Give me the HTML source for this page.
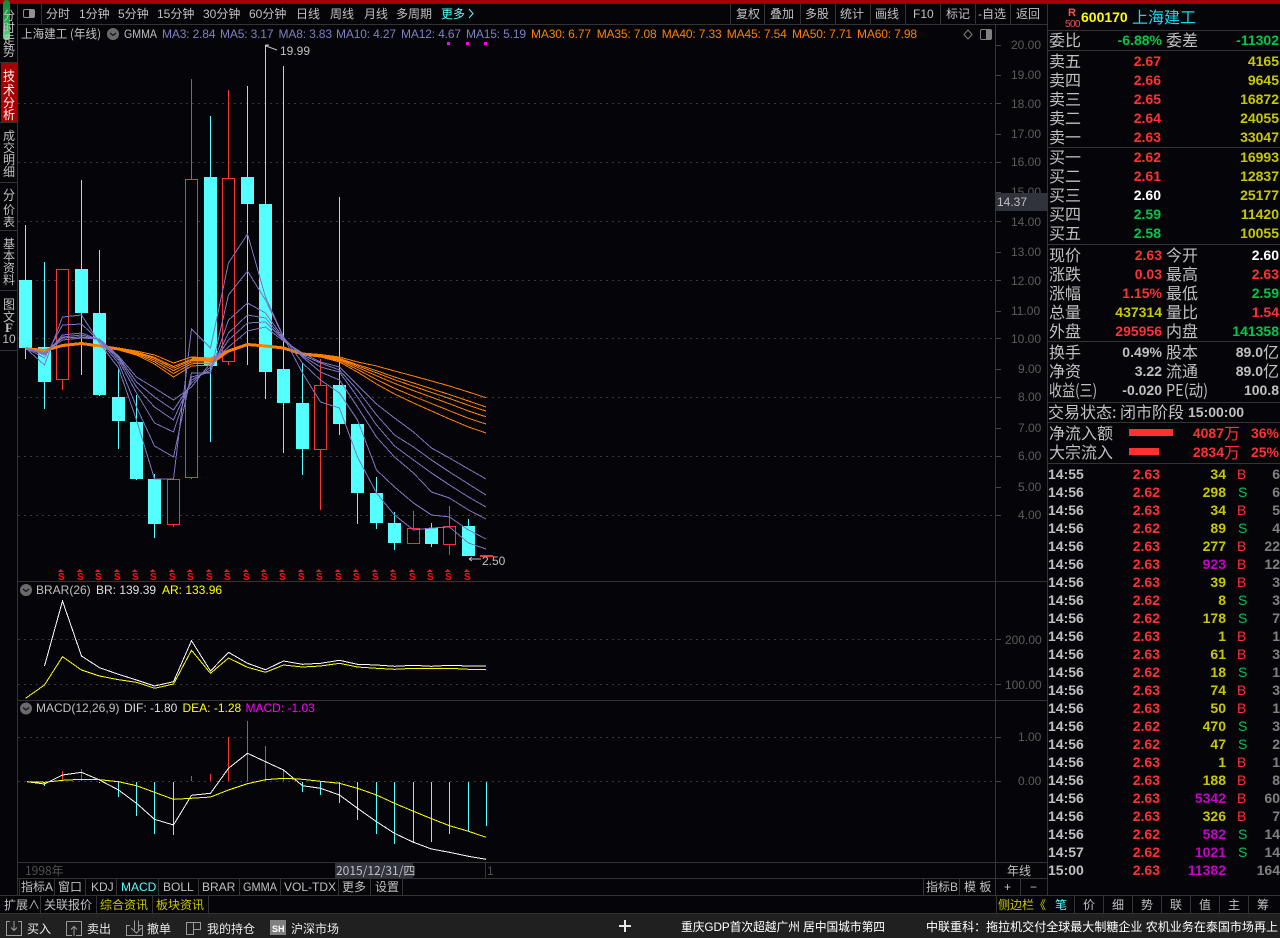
<!DOCTYPE html>
<html><head><meta charset="utf-8"><style>
html,body{margin:0;padding:0;background:#050509;width:1280px;height:938px;overflow:hidden}
svg{display:block}
text{font-family:"Liberation Sans","WenQuanYi Zen Hei","Noto Sans CJK SC",sans-serif;font-size:12px;fill:#c0c0c0}
polyline{shape-rendering:crispEdges}
.cn{font-family:"WenQuanYi Zen Hei","Noto Sans CJK SC",sans-serif}
.l{font-size:16px;font-family:"WenQuanYi Zen Hei","Noto Sans CJK SC",sans-serif}
.n text,.n{font-size:14px;font-weight:bold}
.r,.r text{fill:#ff3232}.y,.y text{fill:#c8c800}.v,.v text{fill:#00c848}.m,.m text{fill:#c800c8}.w{fill:#fff}
.e text{text-anchor:end}
.p polyline{fill:none;stroke:#7d75c0;stroke-width:1}
.o polyline{fill:none;stroke:#ff8000;stroke-width:1}
.ax text{fill:#5c5c5c}
.ma text{fill:#8080c0;letter-spacing:-.15px}
.ma2 text{fill:#ff8000;letter-spacing:-.15px}
</style></head><body>
<svg xmlns="http://www.w3.org/2000/svg" width="1280" height="938" viewBox="0 0 1280 938">
<defs><linearGradient id="gr" x1="0" y1="0" x2="0" y2="1"><stop offset="0" stop-color="#0a8a30"/><stop offset=".6" stop-color="#20b050"/><stop offset="1" stop-color="#70e890"/></linearGradient></defs>
<rect width="1280" height="938" fill="#050509"/>
<g shape-rendering="crispEdges">
<rect width="1280" height="3" fill="#a80000"/>
<rect y="3" width="1280" height="1" fill="#2c2c2c"/>
<rect x="1" y="63" width="16" height="59" fill="#a80000"/>
<path d="M17.5 0V896M0 62.5H17M0 122.5H17M0 182.5H17M0 230.5H17M0 290.5H17M0 350.5H17" stroke="#333" fill="none"/>
<path d="M18 24.5H1047M41.5 4V24M730.5 4V24M764.5 4V24M800.5 4V24M835.5 4V24M870.5 4V24M905.5 4V24M940.5 4V24M975.5 4V24M1010.5 4V24M1047.5 4V896M995.5 25V896M18 581.5H1047M18 700.5H1047M18 862.5H1047M18 878.5H1047M0 895.5H1280M1047 30.5H1280M1047 50.5H1280M1047 147.5H1280M1047 244.5H1280M1047 341.5H1280M1047 402.5H1280M1047 422.5H1280M1047 463.5H1280" stroke="#333" fill="none"/>
<path d="M19.5 879V895M54.5 879V895M85.5 879V895M116.5 879V895M158.5 879V895M198.5 879V895M239.5 879V895M280.5 879V895M338.5 879V895M370.5 879V895M402.5 879V895M923.5 879V895M959.5 879V895M1020.5 879V895M485.5 863V878M40.5 896V913M96.5 896V913M152.5 896V913M208.5 896V913M996.5 896V913M1074.5 896V913M1103.5 896V913M1132.5 896V913M1161.5 896V913M1190.5 896V913M1219.5 896V913M1248.5 896V913" stroke="#333" fill="none"/>
<path d="M18 103.5H996M18 162.5H996M18 221.5H996M18 280.5H996M18 338.5H996M18 397.5H996M18 456.5H996M18 515.5H996M18 639.5H996M18 684.5H996M18 737.5H996M18 781.5H996" stroke="#3a3a3a" stroke-dasharray="2 4" fill="none"/>
<path d="M996 45.5h5M996 75.5h5M996 103.5h5M996 134.5h5M996 162.5h5M996 192.5h5M996 221.5h5M996 252.5h5M996 280.5h5M996 311.5h5M996 338.5h5M996 369.5h5M996 397.5h5M996 428.5h5M996 456.5h5M996 487.5h5M996 515.5h5M996 639.5h5M996 684.5h5M996 737.5h5M996 781.5h5" stroke="#444" fill="none"/>
<rect x="0" y="914" width="1280" height="24" fill="#202020"/>
<rect x="0" y="913" width="1280" height="1" fill="#333"/>
<!-- candles -->
<path stroke="#54ffff" fill="none" d="M25.5 225V359M44.5 262V409M81.5 180V375M99.5 250V396M118.5 368V449M136.5 395V480M154.5 474V538M210.5 116V442M247.5 86V365M265.5 45V399M283.5 66V453M302.5 363V475M339.5 197V435M357.5 424V524M376.5 477V529M394.5 512V550M431.5 523V547M468.5 519V556"/>
<path stroke="#ff3232" fill="none" d="M62.5 380V390M173.5 525V527M191.5 79V179M191.5 478V479M228.5 90V178M228.5 362V365M320.5 359V385M320.5 450V510M413.5 511V528M449.5 506V526M449.5 545V555"/>
<path fill="#54ffff" d="M19 280h13v68h-13zM38 347h13v35h-13zM75 269h13v44h-13zM93 313h13v82h-13zM112 397h13v24h-13zM130 422h13v57h-13zM148 479h13v45h-13zM204 177h13v189h-13zM241 177h13v27h-13zM259 204h13v168h-13zM277 369h13v34h-13zM296 403h13v46h-13zM333 385h13v39h-13zM351 424h13v69h-13zM370 493h13v30h-13zM388 523h13v20h-13zM425 528h13v16h-13zM462 526h13v30h-13z"/>
<path fill="#050509" stroke="#ff3232" d="M56.5 269.5h12v110h-12zM167.5 479.5h12v45h-12zM185.5 179.5h12v298h-12zM222.5 178.5h12v183h-12zM314.5 385.5h12v64h-12zM407.5 528.5h12v15h-12zM443.5 526.5h12v18h-12z"/>
<rect x="480" y="555" width="13" height="2" fill="#ff3232"/>
</g>
<g class="o">
<polyline points="25.5,348 44.5,349.5 62.5,345 81.5,343 99.5,345 118.5,348 136.5,351 154.5,355 173.5,363 191.5,357 210.5,358 228.5,350 247.5,343.5 265.5,345 283.5,347 302.5,353 320.5,354.5 339.5,357 357.5,362 376.5,366 394.5,371 413.5,376 431.5,381 449.5,386 468.5,392 486,397.7"/>
<polyline points="25.5,348 44.5,350 62.5,345.3 81.5,343.3 99.5,345.4 118.5,348.5 136.5,352 154.5,357.3 173.5,366.6 191.5,359.3 210.5,359.8 228.5,350.5 247.5,344 265.5,345.4 283.5,347.5 302.5,353.5 320.5,355 339.5,358.3 357.5,364.6 376.5,370.7 394.5,377 413.5,383 431.5,388.8 449.5,394.6 468.5,401 486,407"/>
<polyline points="25.5,348 44.5,350 62.5,345.4 81.5,343.4 99.5,345.6 118.5,348.8 136.5,352.5 154.5,358.4 173.5,368.3 191.5,360.4 210.5,360.7 228.5,350.8 247.5,344 265.5,345.6 283.5,347.8 302.5,353.8 320.5,355.5 339.5,359 357.5,365.8 376.5,372.8 394.5,379.7 413.5,386.3 431.5,392.4 449.5,398.5 468.5,405.3 486,411"/>
<polyline points="25.5,348 44.5,350.3 62.5,345.5 81.5,343.5 99.5,345.8 118.5,349 136.5,353 154.5,360 173.5,370.6 191.5,361.9 210.5,361.8 228.5,351 247.5,344.3 265.5,345.8 283.5,348 302.5,354 320.5,355.9 339.5,359.7 357.5,367.4 376.5,375.7 394.5,383.4 413.5,390.6 431.5,397.2 449.5,403.8 468.5,411 486,416.8"/>
<polyline points="25.5,348 44.5,350.6 62.5,345.8 81.5,343.8 99.5,346.1 118.5,349.5 136.5,354 154.5,361.8 173.5,373.5 191.5,363.8 210.5,363.3 228.5,351.5 247.5,344.6 265.5,346.1 283.5,348.5 302.5,354.5 320.5,356.4 339.5,360.8 357.5,369.5 376.5,379.5 394.5,388.3 413.5,396.3 431.5,403.5 449.5,410.8 468.5,418.3 486,424"/>
<polyline points="25.5,348 44.5,351 62.5,346 81.5,344 99.5,346.5 118.5,350 136.5,355 154.5,364 173.5,377 191.5,366 210.5,365 228.5,352 247.5,345 265.5,346.5 283.5,349 302.5,355 320.5,357 339.5,362 357.5,372 376.5,384 394.5,394 413.5,403 431.5,411 449.5,419 468.5,427 486,433"/>
<polyline style="stroke-width:3" points="25.5,348.5 44.5,350.5 62.5,345.5 81.5,343.5 99.5,346 118.5,349"/>
<polyline style="stroke-width:3" points="191.5,359 210.5,360 228.5,351 247.5,344.5 265.5,346 283.5,348 302.5,354 320.5,356 339.5,359"/>
</g>
<g class="p">
<polyline points="25.5,348 44.5,365 62.5,317 81.5,315 99.5,343 118.5,368 136.5,420 154.5,479 173.5,479 191.5,329 210.5,348 228.5,263 247.5,234 265.5,297 283.5,337 302.5,373 320.5,402 339.5,408 357.5,457 376.5,493 394.5,515 413.5,530 431.5,528 449.5,527 468.5,543 486,549"/>
<polyline points="25.5,348 44.5,358 62.5,325 81.5,324 99.5,341 118.5,363 136.5,407 154.5,446 173.5,457 191.5,373 210.5,373 228.5,295 247.5,271 265.5,300 283.5,337 302.5,363 320.5,380 339.5,393 357.5,420 376.5,470 394.5,487 413.5,503 431.5,515 449.5,517 468.5,530 486,539"/>
<polyline points="25.5,348 44.5,355 62.5,335 81.5,333 99.5,340 118.5,360 136.5,393 154.5,423 173.5,432 191.5,377 210.5,372 228.5,320 247.5,303 265.5,313 283.5,338 302.5,357 320.5,372 339.5,380 357.5,407 376.5,437 394.5,457 413.5,473 431.5,492 449.5,498 468.5,510 486,519"/>
<polyline points="25.5,348 44.5,354 62.5,337 81.5,335 99.5,340 118.5,358 136.5,387 154.5,407 173.5,420 191.5,380 210.5,370 228.5,333 247.5,315 265.5,318 283.5,339 302.5,356 320.5,367 339.5,372 357.5,397 376.5,425 394.5,446 413.5,460 431.5,473 449.5,485 468.5,497 486,507"/>
<polyline points="25.5,348 44.5,353 62.5,338 81.5,337 99.5,339.5 118.5,357 136.5,382 154.5,397 173.5,410 191.5,383 210.5,367 228.5,340 247.5,323 265.5,322 283.5,340 302.5,355 320.5,363 339.5,370 357.5,390 376.5,415 394.5,435 413.5,447 431.5,460 449.5,472 468.5,484 486,495"/>
<polyline points="25.5,348 44.5,352.7 62.5,340 81.5,338 99.5,339 118.5,356 136.5,377 154.5,388 173.5,400 191.5,387 210.5,363 228.5,347 247.5,331 265.5,327 283.5,341 302.5,353 320.5,362 339.5,367 357.5,385 376.5,404 394.5,418 413.5,432 431.5,448 449.5,458 468.5,469 486,479"/>
</g>
<!-- S markers -->
<path fill="#ff1010" d="M60.7 569l3 3h-6zM79.7 569l3 3h-6zM97.7 569l3 3h-6zM116.7 569l3 3h-6zM134.7 569l3 3h-6zM152.7 569l3 3h-6zM171.7 569l3 3h-6zM189.7 569l3 3h-6zM208.7 569l3 3h-6zM226.7 569l3 3h-6zM245.7 569l3 3h-6zM263.7 569l3 3h-6zM281.7 569l3 3h-6zM300.7 569l3 3h-6zM318.7 569l3 3h-6zM337.7 569l3 3h-6zM355.7 569l3 3h-6zM374.7 569l3 3h-6zM392.7 569l3 3h-6zM411.7 569l3 3h-6zM429.7 569l3 3h-6zM447.7 569l3 3h-6zM466.7 569l3 3h-6z"/>
<text y="580" style="font-size:10px;font-weight:bold;fill:#ff1010" x="58 77 95 114 132 150 169 187 206 224 243 261 279 298 316 335 353 372 390 409 427 445 464">SSSSSSSSSSSSSSSSSSSSSSS</text>
<!-- BRAR -->
<polyline fill="none" stroke="#fff" points="44.5,666 62.5,601 81.5,656 99.5,667.7 118.5,674.3 136.5,680 154.5,686 173.5,681.7 191.5,640.7 210.5,671 228.5,652.3 247.5,663.3 265.5,669.7 283.5,661 302.5,664.3 320.5,663.3 339.5,660.3 357.5,664.3 376.5,665 394.5,666.3 413.5,665.3 431.5,666.3 449.5,665.3 468.5,666 486,666"/>
<polyline fill="none" stroke="#ffff00" points="25.5,698.3 44.5,685 62.5,656.7 81.5,670 99.5,676 118.5,679.7 136.5,682.3 154.5,688.3 173.5,684 191.5,650.3 210.5,673.3 228.5,658 247.5,667.3 265.5,672.3 283.5,665 302.5,667 320.5,666 339.5,663.3 357.5,667 376.5,668.3 394.5,669.3 413.5,668.3 431.5,668.7 449.5,668.3 468.5,669.3 486,669.3"/>
<!-- MACD -->
<g shape-rendering="crispEdges" fill="none">
<path stroke="#ff3232" d="M62.5 771V781M81.5 769V781M191.5 776V781M210.5 774V781M228.5 737V781M247.5 721V781M265.5 746V781M283.5 769V781"/>
<path stroke="#54ffff" d="M44.5 782V786M99.5 782V783M118.5 782V797M136.5 782V816M154.5 782V834M173.5 782V835M302.5 782V792M320.5 782V795M339.5 782V803M357.5 782V820M376.5 782V834M394.5 782V844M413.5 782V843M431.5 782V842M449.5 782V834M468.5 782V831M486.5 782V826"/>
</g>
<polyline fill="none" stroke="#fff" points="27,781.7 44.5,784 62.5,775 81.5,772.3 99.5,780 118.5,790 136.5,803.3 154.5,819.3 173.5,825 191.5,795.3 210.5,793.3 228.5,768.3 247.5,753.3 265.5,761.7 283.5,770 302.5,785.7 320.5,788.3 339.5,795 357.5,808.3 376.5,821.7 394.5,833.3 413.5,842.3 431.5,849 449.5,852.3 468.5,856.3 486,859.3"/>
<polyline fill="none" stroke="#ffff00" points="27,781.7 44.5,782.3 62.5,780.3 81.5,779.3 99.5,779.7 118.5,781.7 136.5,785.7 154.5,792.3 173.5,799.3 191.5,798.3 210.5,797 228.5,790 247.5,783.7 265.5,779.7 283.5,778.3 302.5,779.3 320.5,781.3 339.5,783.3 357.5,788.3 376.5,795 394.5,803.3 413.5,811.3 431.5,818.7 449.5,825.7 468.5,831.3 486,837.3"/>

<!-- left tabs -->
<rect x="3" y="0" width="7" height="40" rx="3" fill="url(#gr)"/>
<g class="cn" text-anchor="middle">
<text transform="translate(9,20) scale(1,1.05)" text-anchor="middle">分</text><text x="9" y="32" text-anchor="middle">时</text><text x="9" y="44" text-anchor="middle">走</text><text transform="translate(9,56) scale(1,1.1)" text-anchor="middle">势</text>
<text transform="translate(9,81) scale(1,1.15)" text-anchor="middle" style="fill:#fff">技</text><text transform="translate(9,95) scale(1,1.1)" text-anchor="middle" style="fill:#fff">术</text><text x="9" y="107" text-anchor="middle" style="fill:#fff">分</text><text x="9" y="119" text-anchor="middle" style="fill:#fff">析</text>
<text x="9" y="140" text-anchor="middle">成</text><text x="9" y="152" text-anchor="middle">交</text><text x="9" y="164" text-anchor="middle">明</text><text x="9" y="176" text-anchor="middle">细</text>
<text transform="translate(9,200) scale(1,1.15)" text-anchor="middle">分</text><text x="9" y="214" text-anchor="middle">价</text><text x="9" y="226" text-anchor="middle">表</text>
<text x="9" y="248" text-anchor="middle">基</text><text x="9" y="260" text-anchor="middle">本</text><text x="9" y="272" text-anchor="middle">资</text><text x="9" y="284" text-anchor="middle">料</text>
<text transform="translate(9,309) scale(1,1.1)" text-anchor="middle">图</text><text x="9" y="321" text-anchor="middle">文</text>
</g>
<text x="9" y="332" text-anchor="middle" style="font-family:'Liberation Serif',serif;font-weight:bold;font-size:13px">F</text>
<text x="9" y="343" text-anchor="middle">10</text>

<!-- toolbar -->
<rect x="23.5" y="9.5" width="11" height="8" rx="1.5" fill="none" stroke="#909090"/><rect x="29" y="10" width="5" height="7" fill="#909090"/>
<g class="cn">
<text x="46" y="18">分时</text><text x="79" y="18">1分钟</text><text x="118" y="18">5分钟</text><text x="157" y="18">15分钟</text><text x="203" y="18">30分钟</text><text x="249" y="18">60分钟</text><text x="296" y="18">日线</text><text x="330" y="18">周线</text><text x="364" y="18">月线</text><text x="396" y="18">多周期</text><text x="441" y="18" style="fill:#54ffff">更多</text>
<text x="736" y="18">复权</text><text x="770" y="18">叠加</text><text x="805" y="18">多股</text><text x="840" y="18">统计</text><text x="875" y="18">画线</text><text x="913" y="18">F10</text><text x="946" y="18">标记</text><text x="978" y="18">-自选</text><text x="1016" y="18">返回</text>
</g>
<path d="M469 9l4 4.5-4 4.5" fill="none" stroke="#54ffff"/>

<!-- chart header -->
<text x="21" y="38" class="cn" textLength="80" lengthAdjust="spacingAndGlyphs">上海建工 (年线)</text>
<g fill="#6a6a6a"><circle cx="113" cy="34" r="6"/><circle cx="26" cy="590" r="6"/><circle cx="26" cy="708.5" r="6"/></g>
<path d="M110 33l3 2.5 3-2.5M23 589l3 2.5 3-2.5M23 707.5l3 2.5 3-2.5" fill="none" stroke="#101010" stroke-width="1.2"/>
<text x="124" y="38" textLength="33" lengthAdjust="spacingAndGlyphs">GMMA</text>
<g class="ma"><text x="162" y="38">MA3: 2.84</text><text x="220" y="38">MA5: 3.17</text><text x="278.5" y="38">MA8: 3.83</text><text x="336" y="38">MA10: 4.27</text><text x="401" y="38">MA12: 4.67</text><text x="466" y="38">MA15: 5.19</text></g>
<g class="ma2"><text x="531" y="38">MA30: 6.77</text><text x="596.7" y="38">MA35: 7.08</text><text x="661.7" y="38">MA40: 7.33</text><text x="726.8" y="38">MA45: 7.54</text><text x="792" y="38">MA50: 7.71</text><text x="857" y="38">MA60: 7.98</text></g>
<path d="M968 30l4 4.5-4 4.5-4-4.5z" fill="none" stroke="#808080"/>
<rect x="980.5" y="29.5" width="11" height="10" rx="1.5" fill="none" stroke="#808080"/><rect x="986" y="30" width="5" height="9" fill="#808080"/>
<g fill="#ff00ff"><rect x="447" y="42" width="3" height="3"/><rect x="466" y="42" width="3" height="3"/><rect x="484" y="42" width="3" height="3"/></g>
<path d="M265.5 45h3M266 46l11 4M266 46l3-1" stroke="#c0c0c0" fill="none"/>
<text x="280" y="55">19.99</text>
<path d="M469 559h12M469 559l3-2M469 559l3 2" stroke="#c0c0c0" fill="none"/>
<text x="482" y="565">2.50</text>

<!-- axis -->
<g class="ax"><text x="1011" y="49">20.00</text><text x="1011" y="79">19.00</text><text x="1011" y="108">18.00</text><text x="1011" y="138">17.00</text><text x="1011" y="166">16.00</text><text x="1011" y="196">15.00</text><text x="1011" y="226">14.00</text><text x="1011" y="256">13.00</text><text x="1011" y="285">12.00</text><text x="1011" y="315">11.00</text><text x="1011" y="343">10.00</text><text x="1018" y="373">9.00</text><text x="1018" y="401">8.00</text><text x="1018" y="432">7.00</text><text x="1018" y="460">6.00</text><text x="1018" y="491">5.00</text><text x="1018" y="519">4.00</text><text x="1005" y="644">200.00</text><text x="1005" y="689">100.00</text><text x="1018" y="741">1.00</text><text x="1018" y="785">0.00</text></g>
<rect x="996" y="193" width="51" height="18" fill="#30323c" shape-rendering="crispEdges"/>
<text x="997" y="206">14.37</text>

<!-- sub headers -->
<text x="36" y="594">BRAR(26)</text><text x="96" y="594" style="fill:#e0e0e0">BR: 139.39</text><text x="162" y="594" style="fill:#ffff00">AR: 133.96</text>
<text x="36" y="712">MACD(12,26,9)</text><text x="124" y="712" style="fill:#e0e0e0">DIF: -1.80</text><text x="182.5" y="712" style="fill:#ffff00">DEA: -1.28</text><text x="245.5" y="712" style="fill:#ff00ff">MACD: -1.03</text>

<!-- date row -->
<rect x="335" y="863" width="78" height="15" fill="#30323c" shape-rendering="crispEdges"/>
<text x="25" y="875" class="cn" style="fill:#505050">1998年</text>
<text x="336" y="875" class="cn">2015/12/31/四</text>
<text x="487" y="875" style="fill:#505050">1</text>
<text x="1007" y="875" class="cn">年线</text>

<!-- tab row -->
<g class="cn">
<text x="21" y="891">指标A</text><text x="58" y="891">窗口</text><text x="91" y="891">KDJ</text><text x="121" y="891" style="fill:#54ffff">MACD</text><text x="163" y="891">BOLL</text><text x="202" y="891">BRAR</text><text x="243" y="891" textLength="34" lengthAdjust="spacingAndGlyphs">GMMA</text><text x="284" y="891">VOL-TDX</text><text x="342" y="891">更多</text><text x="375" y="891">设置</text>
<text x="926" y="891">指标B</text><text x="964" y="891">模 板</text><text x="1004" y="891">+</text><text x="1030" y="891">−</text>
<text x="4" y="909">扩展∧</text><text x="44" y="909">关联报价</text><text x="100" y="909" style="fill:#c8c800">综合资讯</text><text x="156" y="909" style="fill:#c8c800">板块资讯</text>
<text x="998" y="909" style="fill:#c8c800">侧边栏《</text>
<text x="1055" y="909" style="fill:#54ffff">笔</text><text x="1083" y="909">价</text><text x="1112" y="909">细</text><text x="1141" y="909">势</text><text x="1170" y="909">联</text><text x="1199" y="909">值</text><text x="1228" y="909">主</text><text x="1257" y="909">筹</text>
</g>

<!-- bottom bar -->
<g fill="none" stroke="#9a9a9a">
<path d="M10 921.5H6.5V935.5H21.5V921.5H18M14 921V930M11 927.5l3 3 3-3" />
<path d="M66.5 921.5H81.5V935.5H76M72 935.5H66.5V921.5M74 936V927M71 929.5l3-3 3 3"/>
<path d="M130 925.5H126.5V935.5H142.5V925.5H139M134.5 920.5V930M138.5 920.5V930M131 928l5.5 5 5-5" />
<path d="M186.5 922.5H193.5V934.5H186.5ZM193.5 922.5H200.5V929.5H193.5"/>
</g>
<rect x="270" y="920" width="16" height="15" fill="#808080" shape-rendering="crispEdges"/>
<text x="272" y="932" style="font-size:9px;font-weight:bold;fill:#fff">SH</text>
<g class="cn" style="fill:#e8e8e8">
<text x="27" y="933" style="fill:#e8e8e8">买入</text><text x="87" y="933" style="fill:#e8e8e8">卖出</text><text x="147" y="933" style="fill:#e8e8e8">撤单</text><text x="207" y="933" style="fill:#e8e8e8">我的持仓</text><text x="291" y="933" style="fill:#e8e8e8">沪深市场</text>
<text x="681" y="931" style="fill:#fff" textLength="204" lengthAdjust="spacingAndGlyphs">重庆GDP首次超越广州 居中国城市第四</text>
<text x="926" y="931" style="fill:#fff" textLength="352" lengthAdjust="spacingAndGlyphs">中联重科：拖拉机交付全球最大制糖企业 农机业务在泰国市场再上</text>
</g>
<path d="M625 920v12M619 926h12" stroke="#e8e8e8" stroke-width="2" fill="none"/>

<!-- right panel header -->
<text x="1068" y="16" style="font-size:11px;font-weight:bold;fill:#ff5050">R</text>
<text x="1065" y="27" style="font-size:10px;fill:#ff5050;letter-spacing:-.6px">500</text>
<text x="1081" y="22" class="n" style="fill:#ffff00">600170</text>
<text x="1132" y="23" class="l" style="fill:#18d8e8">上海建工</text>

<!-- labels -->
<g class="l">
<text class="l" x="1049" y="46">委比</text><text class="l" x="1166" y="46">委差</text>
<text class="l" x="1049" y="67">卖五</text><text class="l" x="1049" y="86">卖四</text><text class="l" x="1049" y="105">卖三</text><text class="l" x="1049" y="124">卖二</text><text class="l" x="1049" y="143">卖一</text>
<text class="l" x="1049" y="163">买一</text><text class="l" x="1049" y="182">买二</text><text class="l" x="1049" y="201">买三</text><text class="l" x="1049" y="220">买四</text><text class="l" x="1049" y="239">买五</text>
<text class="l" x="1049" y="261">现价</text><text class="l" x="1049" y="280">涨跌</text><text class="l" x="1049" y="299">涨幅</text><text class="l" x="1049" y="318">总量</text><text class="l" x="1049" y="337">外盘</text>
<text class="l" x="1166" y="261">今开</text><text class="l" x="1166" y="280">最高</text><text class="l" x="1166" y="299">最低</text><text class="l" x="1166" y="318">量比</text><text class="l" x="1166" y="337">内盘</text>
<text class="l" x="1049" y="358">换手</text><text class="l" x="1049" y="377">净资</text><text class="l" x="1049" y="396" textLength="48" lengthAdjust="spacingAndGlyphs">收益(三)</text>
<text class="l" x="1166" y="358">股本</text><text class="l" x="1166" y="377">流通</text>
<text class="l" x="1166" y="396" textLength="42" lengthAdjust="spacingAndGlyphs">PE(动)</text>
<text class="l" x="1048" y="418">交易状态: 闭市阶段</text>
<text class="l" x="1049" y="439">净流入额</text><text class="l" x="1049" y="458">大宗流入</text>
</g>

<g class="n e">
<g class="v"><text x="1162" y="45">-6.88%</text><text x="1279" y="45">-11302</text></g>
<g class="r"><text x="1161" y="66">2.67</text><text x="1161" y="85">2.66</text><text x="1161" y="104">2.65</text><text x="1161" y="123">2.64</text><text x="1161" y="142">2.63</text><text x="1161" y="162">2.62</text><text x="1161" y="181">2.61</text></g>
<text x="1161" y="200" class="w">2.60</text>
<g class="v"><text x="1161" y="219">2.59</text><text x="1161" y="238">2.58</text></g>
<g class="y"><text x="1279" y="66">4165</text><text x="1279" y="85">9645</text><text x="1279" y="104">16872</text><text x="1279" y="123">24055</text><text x="1279" y="142">33047</text><text x="1279" y="162">16993</text><text x="1279" y="181">12837</text><text x="1279" y="200">25177</text><text x="1279" y="219">11420</text><text x="1279" y="238">10055</text></g>
<g class="r"><text x="1162" y="260">2.63</text><text x="1162" y="279">0.03</text><text x="1162" y="298">1.15%</text><text x="1162" y="336">295956</text><text x="1279" y="279">2.63</text><text x="1279" y="317">1.54</text></g>
<text x="1162" y="317" class="y">437314</text>
<text x="1279" y="260" class="w">2.60</text>
<g class="v"><text x="1279" y="298">2.59</text><text x="1279" y="336">141358</text></g>
<text x="1162" y="357">0.49%</text><text x="1162" y="376">3.22</text><text x="1162" y="395">-0.020</text>
<text x="1279" y="395">100.8</text>
<text x="1263" y="357">89.0</text><text x="1263" y="376">89.0</text>
</g>
<text class="l" x="1263" y="358">亿</text><text class="l" x="1263" y="377">亿</text>
<text x="1188" y="417" class="n">15:00:00</text>

<rect x="1129" y="429" width="44" height="7" fill="#ff3232" shape-rendering="crispEdges"/>
<rect x="1129" y="448" width="30" height="7" fill="#ff3232" shape-rendering="crispEdges"/>
<g class="n e r"><text x="1224" y="438">4087</text><text x="1224" y="457">2834</text><text x="1279" y="438">36%</text><text x="1279" y="457">25%</text></g>
<text class="l" x="1224" y="439" style="fill:#ff3232">万</text><text class="l" x="1224" y="458" style="fill:#ff3232">万</text>

<!-- ticks: time -->
<g class="n">
<text x="1048" y="479">14:55</text><text x="1048" y="497">14:56</text><text x="1048" y="515">14:56</text><text x="1048" y="533">14:56</text><text x="1048" y="551">14:56</text><text x="1048" y="569">14:56</text><text x="1048" y="587">14:56</text><text x="1048" y="605">14:56</text><text x="1048" y="623">14:56</text><text x="1048" y="641">14:56</text><text x="1048" y="659">14:56</text><text x="1048" y="677">14:56</text><text x="1048" y="695">14:56</text><text x="1048" y="713">14:56</text><text x="1048" y="731">14:56</text><text x="1048" y="749">14:56</text><text x="1048" y="767">14:56</text><text x="1048" y="785">14:56</text><text x="1048" y="803">14:56</text><text x="1048" y="821">14:56</text><text x="1048" y="839">14:56</text><text x="1048" y="857">14:57</text><text x="1048" y="875">15:00</text>
</g>
<g class="n e r">
<text x="1160" y="479">2.63</text><text x="1160" y="497">2.62</text><text x="1160" y="515">2.63</text><text x="1160" y="533">2.62</text><text x="1160" y="551">2.63</text><text x="1160" y="569">2.63</text><text x="1160" y="587">2.63</text><text x="1160" y="605">2.62</text><text x="1160" y="623">2.62</text><text x="1160" y="641">2.63</text><text x="1160" y="659">2.63</text><text x="1160" y="677">2.62</text><text x="1160" y="695">2.63</text><text x="1160" y="713">2.63</text><text x="1160" y="731">2.62</text><text x="1160" y="749">2.62</text><text x="1160" y="767">2.63</text><text x="1160" y="785">2.63</text><text x="1160" y="803">2.63</text><text x="1160" y="821">2.63</text><text x="1160" y="839">2.62</text><text x="1160" y="857">2.62</text><text x="1160" y="875">2.63</text>
</g>
<g class="n e y">
<text x="1226" y="479">34</text><text x="1226" y="497">298</text><text x="1226" y="515">34</text><text x="1226" y="533">89</text><text x="1226" y="551">277</text><text x="1226" y="587">39</text><text x="1226" y="605">8</text><text x="1226" y="623">178</text><text x="1226" y="641">1</text><text x="1226" y="659">61</text><text x="1226" y="677">18</text><text x="1226" y="695">74</text><text x="1226" y="713">50</text><text x="1226" y="731">470</text><text x="1226" y="749">47</text><text x="1226" y="767">1</text><text x="1226" y="785">188</text><text x="1226" y="821">326</text>
</g>
<g class="n e m">
<text x="1226" y="569">923</text><text x="1226" y="803">5342</text><text x="1226" y="839">582</text><text x="1226" y="857">1021</text><text x="1226" y="875">11382</text>
</g>
<g style="font-size:14px" class="r">
<text style="font-size:14px" x="1237" y="479">B</text><text style="font-size:14px" x="1237" y="515">B</text><text style="font-size:14px" x="1237" y="551">B</text><text style="font-size:14px" x="1237" y="569">B</text><text style="font-size:14px" x="1237" y="587">B</text><text style="font-size:14px" x="1237" y="641">B</text><text style="font-size:14px" x="1237" y="659">B</text><text style="font-size:14px" x="1237" y="695">B</text><text style="font-size:14px" x="1237" y="713">B</text><text style="font-size:14px" x="1237" y="767">B</text><text style="font-size:14px" x="1237" y="785">B</text><text style="font-size:14px" x="1237" y="803">B</text><text style="font-size:14px" x="1237" y="821">B</text>
</g>
<g class="v">
<text style="font-size:14px" x="1238" y="497">S</text><text style="font-size:14px" x="1238" y="533">S</text><text style="font-size:14px" x="1238" y="605">S</text><text style="font-size:14px" x="1238" y="623">S</text><text style="font-size:14px" x="1238" y="677">S</text><text style="font-size:14px" x="1238" y="731">S</text><text style="font-size:14px" x="1238" y="749">S</text><text style="font-size:14px" x="1238" y="839">S</text><text style="font-size:14px" x="1238" y="857">S</text>
</g>
<g class="n e" fill="#808080">
<text x="1280" y="479" style="fill:#808080">6</text><text x="1280" y="497" style="fill:#808080">6</text><text x="1280" y="515" style="fill:#808080">5</text><text x="1280" y="533" style="fill:#808080">4</text><text x="1280" y="551" style="fill:#808080">22</text><text x="1280" y="569" style="fill:#808080">12</text><text x="1280" y="587" style="fill:#808080">3</text><text x="1280" y="605" style="fill:#808080">3</text><text x="1280" y="623" style="fill:#808080">7</text><text x="1280" y="641" style="fill:#808080">1</text><text x="1280" y="659" style="fill:#808080">3</text><text x="1280" y="677" style="fill:#808080">1</text><text x="1280" y="695" style="fill:#808080">3</text><text x="1280" y="713" style="fill:#808080">1</text><text x="1280" y="731" style="fill:#808080">3</text><text x="1280" y="749" style="fill:#808080">2</text><text x="1280" y="767" style="fill:#808080">1</text><text x="1280" y="785" style="fill:#808080">8</text><text x="1280" y="803" style="fill:#808080">60</text><text x="1280" y="821" style="fill:#808080">7</text><text x="1280" y="839" style="fill:#808080">14</text><text x="1280" y="857" style="fill:#808080">14</text><text x="1280" y="875" style="fill:#808080">164</text>
</g>
</svg>
</body></html>
